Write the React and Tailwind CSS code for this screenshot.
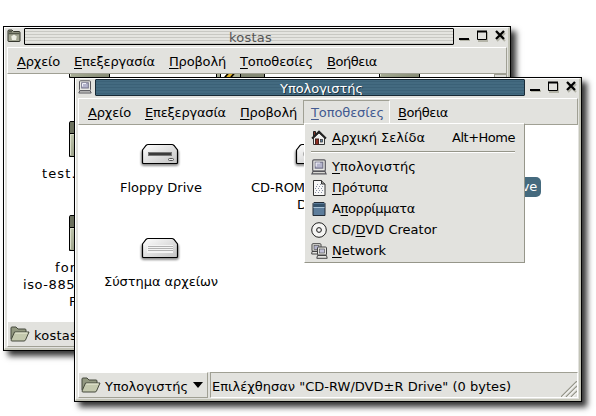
import React from 'react';

const FONT = "font-['DejaVu_Sans',sans-serif] text-[13px] leading-[16px] whitespace-pre";

function Label({ text, accel = -1, width, className = '' }) {
  const ref = React.useRef(null);
  const [gap, setGap] = React.useState(0);
  React.useLayoutEffect(() => {
    if (width && ref.current) {
      setGap((width - ref.current.getBoundingClientRect().width) / text.length);
    }
  }, [text, width]);
  return (
    <span ref={ref} className={`inline-block shrink-0 ${FONT} ${className}`} style={{ letterSpacing: gap }}>
      {accel < 0 ? text : (
        <>
          {text.slice(0, accel)}
          <span className="underline decoration-1 underline-offset-2 [text-decoration-skip-ink:none]">{text[accel]}</span>
          {text.slice(accel + 1)}
        </>
      )}
    </span>
  );
}

function FolderGlyph() {
  return (
    <svg width="14" height="14" viewBox="0 0 14 14">
      <path d="M1 12V2Q1 1 2 1H5L6.5 2.5H12Q13 2.5 13 3.5V12Q13 12.5 12 12.5H2Q1 12.5 1 12Z" fill="#a2a592" stroke="#34362d" />
      <path d="M1.5 4.5H12.5M2 2.5H5" stroke="#55584b" strokeWidth="1.5" />
      <path d="M7 5.5L9.8 7.6L9 11H5L4.2 7.6Z" fill="#ecede3" />
    </svg>
  );
}

function ComputerGlyph({ size = 14 }) {
  return (
    <svg width={size} height={size} viewBox="0 0 14 14">
      <rect x="1.5" y="0.8" width="11" height="9.8" rx="1" fill="#e8e8e4" stroke="#55545a" />
      <rect x="3.7" y="2.8" width="6.6" height="5.2" fill="#b4b4cc" stroke="#74738a" />
      <path d="M4.5 6.5V3.5H8" stroke="#f0f0f8" fill="none" />
      <path d="M1.8 10.8H12.2L13.2 13H.8Z" fill="#d8d8d4" stroke="#55545a" />
    </svg>
  );
}

function OpenFolder() {
  return (
    <svg className="shrink-0" width="20" height="16" viewBox="0 0 20 16">
      <path d="M1 13V2Q1 1 2 1H6L8 3H15Q16 3 16 4V6" fill="#929880" stroke="#45493c" />
      <path d="M1 14L4.5 6H19L15.5 14Q15 15 14 15H2Q1 15 1 14Z" fill="#c4c9ae" stroke="#45493c" />
      <path d="M5.2 7H17.5" stroke="#edf0da" />
    </svg>
  );
}

function HouseGlyph() {
  return (
    <svg width="16" height="16" viewBox="0 0 16 16">
      <path d="M2.5 8L8 3L13.5 8V14.5H2.5Z" fill="#eeeeec" stroke="#333" />
      <path d="M2.5 1.5H4.5V6L2.5 7Z" fill="#883428" stroke="#222" />
      <path d="M1 8.5L8 1.5L15 8.5" fill="none" stroke="#222" strokeWidth="1.8" />
      <rect x="4.5" y="9" width="3" height="5.5" fill="#8d2d21" stroke="#42201c" />
      <rect x="9.5" y="9.5" width="2" height="2.5" fill="#5b7fa0" stroke="#333" strokeWidth=".7" />
    </svg>
  );
}

function PaperGlyph() {
  return (
    <svg width="16" height="16" viewBox="0 0 16 16">
      <path d="M2.5 .5H10.5L14 4V15.5H2.5Z" fill="#f7f7f7" stroke="#333" />
      <path d="M10.5 .5V4H14" fill="#999" stroke="#333" />
      <path d="M6 4.5H10M5 6.5H12M4 8.5H12M5 10.5H12M4 12.5H12" stroke="#8890a4" strokeDasharray="1 2" />
    </svg>
  );
}

function BinGlyph() {
  return (
    <svg width="16" height="16" viewBox="0 0 16 16">
      <path d="M2 2.5L3 1.5H13L14 2.5V14.5H2Z" fill="#5d7d9b" stroke="#222b35" />
      <rect x="3" y="3" width="10" height="3" fill="#35536c" />
      <path d="M2.5 6.5H13.5" stroke="#a9c2d6" />
    </svg>
  );
}

function DiscGlyph() {
  return (
    <svg width="16" height="16" viewBox="0 0 16 16">
      <circle cx="8" cy="8" r="7.3" fill="#f5f5f3" stroke="#222" />
      <circle cx="8" cy="8" r="2.4" fill="#ddd" stroke="#222" />
      <circle cx="8" cy="8" r="1" fill="#fff" />
    </svg>
  );
}

function NetworkGlyph() {
  return (
    <svg width="17" height="16" viewBox="0 0 17 16">
      <g stroke="#444" fill="#e4e4e0">
        <rect x="1" y=".7" width="9" height="7.5" rx="1" />
        <path d="M1 8.5H9V11H.7Z" />
        <rect x="3" y="2.5" width="5" height="4" fill="#b4b4cc" strokeWidth=".6" />
        <rect x="6.5" y="4" width="9" height="8" rx="1" />
        <path d="M6.5 12.5H15.5L16.2 15.3H5.8Z" />
        <rect x="8.5" y="6" width="5" height="4" fill="#c0c0d6" strokeWidth=".6" />
      </g>
    </svg>
  );
}

function DriveIcon({ kind }) {
  return (
    <svg className="block" width="44" height="28" viewBox="0 0 44 28">
      <defs>
        <linearGradient id={`face-${kind}`} x1="0" y1="0" x2="1" y2="1">
          <stop offset="0" stopColor="#ffffff" />
          <stop offset="1" stopColor="#c2c2c2" />
        </linearGradient>
        <filter id={`soft-${kind}`} x="-20%" y="-50%" width="140%" height="200%">
          <feGaussianBlur stdDeviation="1.3" />
        </filter>
      </defs>
      <rect x="3" y="8" width="38" height="16" rx="3" fill="#000" opacity=".45" filter={`url(#soft-${kind})`} />
      <path d="M4.5 8L8 3.5Q9 2.5 10 2.5H34Q35 2.5 36 3.5L39.5 8V20.5Q39.5 21.5 38.5 21.5H5.5Q4.5 21.5 4.5 20.5Z" fill={`url(#face-${kind})`} stroke="#000" strokeWidth="1.2" />
      {kind === 'floppy' && (
        <>
          <rect x="10.5" y="10.5" width="23" height="3" fill="#3a3a3a" stroke="#777" />
          <rect x="30.5" y="16.5" width="5" height="2" rx="1" fill="#eee" stroke="#555" />
        </>
      )}
      {kind === 'disk' && (
        <>
          <rect x="9" y="9" width="26" height="8" fill="#f4f4f4" />
          <path d="M10 10.5H35M10 12.5H35M10 14.5H35" stroke="#b2b2b2" />
        </>
      )}
      {kind === 'cd' && <circle cx="14" cy="12" r="3" fill="#aaa" />}
    </svg>
  );
}

function WindowButtons() {
  return (
    <svg className="shrink-0" width="50" height="14" viewBox="0 0 50 14" fill="none">
      <g stroke="#b4b4a8" strokeWidth="2" transform="translate(1 1)">
        <path d="M3 10H13" /><path d="M22 3H30V11H22Z" /><path d="M40 3L48 11M48 3L40 11" />
      </g>
      <path d="M3 10H13" stroke="#000" strokeWidth="2" />
      <path d="M21.5 2.5H30.5V10.5H21.5Z" fill="#e2e2de" stroke="#000" />
      <path d="M21 2.5H31" stroke="#000" strokeWidth="2" />
      <path d="M40 2L48 10M48 2L40 10" stroke="#000" strokeWidth="2.3" />
    </svg>
  );
}

const MENUS = [
  ['Αρχείο', 43],
  ['Επεξεργασία', 81],
  ['Προβολή', 57],
  ['Τοποθεσίες', 73],
  ['Βοήθεια', 50],
];

function Window({ title, active, icon, place, children, status }) {
  return (
    <section className={`absolute ${place} flex h-[325px] w-[508px] flex-col border border-black bg-[#e2e2de] shadow-[5px_5px_6px_rgba(0,0,0,0.8)]`}>
      <div className="flex grow flex-col border-t border-l border-t-white border-l-white border-r-2 border-b-2 border-r-[#c3c4b7] border-b-[#c3c4b7] pl-[2px]">
        <header className="flex h-[19px] shrink-0 items-start">
          <div className="flex h-[17px] w-[17px] shrink-0 items-center pb-px">{icon}</div>
          <div className={`flex h-[17px] w-[430px] shrink-0 items-center justify-center overflow-hidden rounded-[1px] border pt-[2px] pl-[23px] ${active ? 'border-[#182a36] bg-[repeating-linear-gradient(180deg,#436a80_0_1px,#3b6177_1px_2px,#436a80_2px_3px)] text-white [text-shadow:1px_1px_0_#1d3442]' : 'border-black bg-[repeating-linear-gradient(180deg,#e4e4e0_0_2px,#c8c8c3_2px_3px)] text-[#555]'}`}>
            <Label text={title} width={active ? 83 : 43} />
          </div>
          <div className="flex pt-px pl-[2px]"><WindowButtons /></div>
        </header>
        <nav className="flex h-[27px] w-[500px] shrink-0 items-center border border-t-white border-l-white border-r-[#a0a094] border-b-[#a0a094] pl-[9px]">
          {MENUS.map(([name, width], i) => (
            <div key={name} className={active && i === 3 ? 'mr-[8px] -ml-[8px] flex h-[24px] w-[87px] items-center border border-t-[#a0a094] border-l-[#a0a094] border-r-white border-b-[#e2e2de] pl-[7px] text-[#435b91]' : 'mr-[14px] flex'}>
              <Label text={name} accel={0} width={width} className="mt-[2px]" />
            </div>
          ))}
        </nav>
        <main className="relative h-[247px] w-[500px] shrink-0 overflow-hidden bg-white">{children}</main>
        {status}
      </div>
    </section>
  );
}

function PlaceButton({ label, width }) {
  return (
    <div className="flex h-[26px] w-[130px] shrink-0 items-center border border-t-white border-l-white border-r-[#a0a094] border-b-[#a0a094] pl-[2px]">
      <OpenFolder />
      <Label text={label} width={width} className="mt-[3px] ml-[4px]" />
      <svg className="ml-[5px]" width="10" height="6" viewBox="0 0 10 6"><path d="M0 0H10L5 6Z" fill="#000" /></svg>
    </div>
  );
}

// Icons on a file view's free canvas.
function Item({ place, children }) {
  return <div className={`absolute ${place}`}>{children}</div>;
}

function FolderIcon() {
  return (
    <svg className="block" width="44" height="38" viewBox="0 0 44 38">
      <defs>
        <linearGradient id="folder-front" x1="0" y1="0" x2="1" y2="1">
          <stop offset="0" stopColor="#c3c9af" />
          <stop offset="1" stopColor="#858a74" />
        </linearGradient>
      </defs>
      <path d="M1.5 35.5V2.5Q1.5 1.5 3 1.5H16L19 5.5H41.5V35.5Z" fill="#6d725f" stroke="#000" />
      <path d="M1.5 13.5H41.5V36.5H1.5Z" fill="url(#folder-front)" stroke="#000" />
      <path d="M2.5 35V14.5H41" fill="none" stroke="#dde1cd" />
    </svg>
  );
}

const PLACES = [
  ['Υπολογιστής', 0, 84, <ComputerGlyph size={16} />],
  ['Πρότυπα', 0, 56, <PaperGlyph />],
  ['Απορρίμματα', 1, 83, <BinGlyph />],
  ['CD/DVD Creator', 3, 105, <DiscGlyph />],
  ['Network', 0, 54, <NetworkGlyph />],
];

export default function App() {
  return (
    <div className="relative h-[416px] w-[596px] overflow-hidden bg-white text-black">
      <Window
        title="kostas"
        icon={<FolderGlyph />}
        place="left-[3px] top-[26px]"
        status={
          <footer className="flex h-[26px] w-[500px]"><PlaceButton label="kostas" width={43} /></footer>
        }
      >
        <Item place="left-[61px] -top-[33px]"><FolderIcon /></Item>
        <Item place="left-[209px] top-0 flex h-[4px] w-[49px]">
          <div className="w-[5px] border-x border-black bg-[#a7ac94]" />
          <div className="w-[4px]" />
          <div className="w-[8px] -skew-x-[40deg] border-x-2 border-black bg-[#e0b32c]" />
          <div className="w-[7px] bg-[#b0b69d]" />
          <div className="w-[25px] border-x border-black bg-[#858a76]" />
        </Item>
        <Item place="left-[371px] -top-[33px]"><FolderIcon /></Item>
        <Item place="right-0 top-0 h-[247px] w-[13px] border border-[#a0a094] bg-[#e2e2de]" />
        <Item place="left-[61px] top-[46px]"><FolderIcon /></Item>
        <Item place="left-[61px] top-[140px]"><FolderIcon /></Item>
        <Item place="left-[35px] top-[86px]"><Label text="test.txt" width={56} /></Item>
        <Item place="left-[48px] top-[180px]"><Label text="fonts" width={38} /></Item>
        <Item place="left-[16px] top-[197px]"><Label text="iso-8859-7" width={75} /></Item>
        <Item place="left-[62px] top-[214px]"><Label text="F" /></Item>
      </Window>

      <Window
        active
        title="Υπολογιστής"
        icon={<ComputerGlyph />}
        place="left-[74px] top-[77px]"
        status={
          <footer className="flex h-[26px] w-[500px] gap-[2px]">
            <PlaceButton label="Υπολογιστής" width={83} />
            <div className="flex grow items-center justify-between border border-t-[#a0a094] border-l-[#a0a094] border-r-white border-b-white pl-px">
              <Label text={'Επιλέχθησαν "CD-RW/DVD±R Drive" (0 bytes)'} width={299} className="mt-[3px]" />
              <svg className="self-end" width="16" height="16" viewBox="0 0 16 16">
                <path d="M0 16L16 0M5 16L16 5M10 16L16 10" stroke="#96968a" strokeWidth="1.3" />
                <path d="M1.5 16L16 1.5M6.5 16L16 6.5M11.5 16L16 11.5" stroke="#fff" />
              </svg>
            </div>
          </footer>
        }
      >
        <Item place="left-[60px] top-[17px]"><DriveIcon kind="floppy" /></Item>
        <Item place="left-[42px] top-[49px]"><Label text="Floppy Drive" width={82} /></Item>
        <Item place="left-[214px] top-[17px]"><DriveIcon kind="cd" /></Item>
        <Item place="left-[173px] top-[49px]"><Label text="CD-ROM" width={54} /></Item>
        <Item place="left-[219px] top-[66px]"><Label text="D" /></Item>
        <Item place="left-[60px] top-[111px]"><DriveIcon kind="disk" /></Item>
        <Item place="left-[26px] top-[143px]"><Label text="Σύστημα αρχείων" width={114} /></Item>
        <Item place="left-[322px] top-[52px] flex h-[20px] w-[141px] items-center justify-end rounded-[5px] bg-[#456a7e] pr-[4px] text-white">
          <Label text="CD-RW/DVD±R Drive" width={133} />
        </Item>
      </Window>

      <div className="absolute top-[123px] left-[304px] flex h-[140px] w-[221px] flex-col border border-t-white border-l-white border-r-[#96968a] border-b-[#96968a] bg-[#e2e2de] pr-[8px] pl-[6px]">
        <div className="flex h-[27px] items-center">
          <HouseGlyph />
          <Label text="Αρχική Σελίδα" accel={0} width={93} className="ml-[5px]" />
          <Label text="Alt+Home" width={63} className="mr-px ml-auto" />
        </div>
        <div className="mr-px h-[2px] shrink-0 border-t border-b border-t-[#96968a] border-b-white" />
        <div className="flex flex-col pt-[3px]">
          {PLACES.map(([name, accel, width, icon]) => (
            <div key={name} className="flex h-[21px] items-center">
              <div className="w-[21px]">{icon}</div>
              <Label text={name} accel={accel} width={width} />
            </div>
          ))}
        </div>
      </div>
    </div>
  );
}
